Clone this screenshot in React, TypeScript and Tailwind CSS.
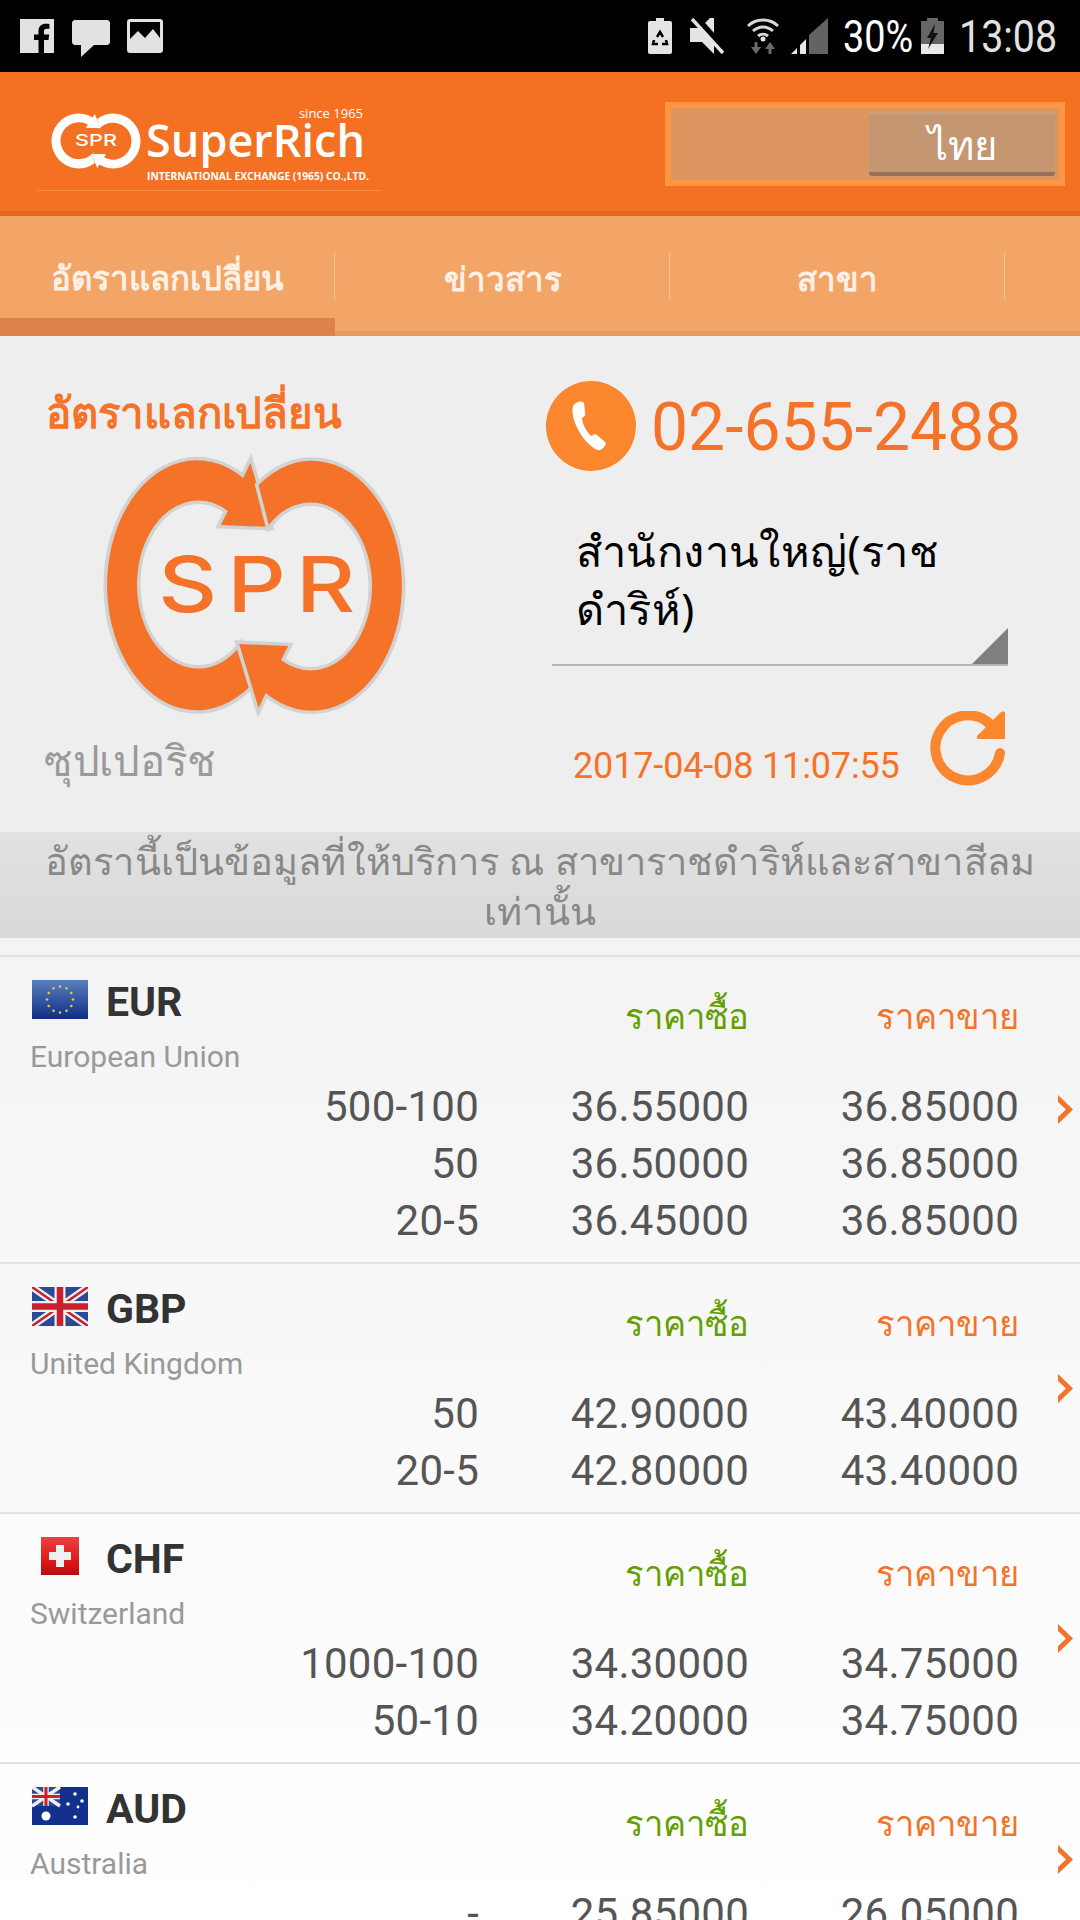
import React from 'react';

const roboto = "font-['Roboto',sans-serif]";

// --- LOGO ---
const ringPath = 'M243 477 A88 125 0 1 0 250 685 L240 645 A60 84 0 1 1 228 510 L221 524 L269 526 L250 462 Z';

const BigLogo = () => (
  <svg viewBox="100 450 310 270" preserveAspectRatio="none" className="ml-[97px] mt-[8px] h-[270px] w-[317px]">
    <g fill="#f57329" stroke="#d2d2d2" strokeWidth="7" style={{ paintOrder: 'stroke' }}>
      <path d={ringPath} />
      <path d={ringPath} transform="rotate(180 254 584.5)" />
    </g>
    <text transform="translate(160 611) scale(1.16 1)" x="0 58 116" fontFamily="Inter, sans-serif" fontWeight="500" fontSize="77" fill="#f57329">SPR</text>
  </svg>
);

const SmallLogo = () => (
  <svg viewBox="0 0 92 56" className="mt-[6px] h-[56px] w-[92px] shrink-0">
    <g fill="#fff" transform="scale(0.3087 0.2196) translate(-105 -457)">
      <path d={ringPath} />
      <path d={ringPath} transform="rotate(180 254 584.5)" />
    </g>
    <text x="25" y="33" fontFamily="Inter, sans-serif" fontWeight="500" fontSize="16" fill="#fff" textLength="42" lengthAdjust="spacingAndGlyphs">SPR</text>
  </svg>
);

// --- STATUS BAR ---
const StatusBar = () => (
  <div className="flex h-[72px] items-center bg-black pl-[20px]">
    <svg viewBox="0 0 34 34" className="h-[34px] w-[34px]">
      <path fill="#e2e2e2" d="M0 0H34V34H24V21H28.500L29.200 15.500H24V12.500C24 10.800 24.600 9.800 26.800 9.800H29.400V5C28.500 4.900 27.400 4.800 25.800 4.800C21.800 4.800 18.500 7.200 18.500 11.800V15.500H14V21H18.500V34H0Z" />
    </svg>
    <svg viewBox="0 0 38 38" className="ml-[18px] mt-[20px] h-[38px] w-[38px] self-start">
      <path fill="#e2e2e2" d="M3 0H35C36.600 0 38 1.400 38 3V22C38 23.600 36.600 25 35 25H22L9 37V25H3C1.400 25 0 23.600 0 22V3C0 1.400 1.400 0 3 0Z" />
    </svg>
    <svg viewBox="0 0 36 34" className="ml-[17px] h-[34px] w-[36px]">
      <path fill="#e2e2e2" fillRule="evenodd" d="M3 0H33C34.700 0 36 1.300 36 3V31C36 32.700 34.700 34 33 34H3C1.300 34 0 32.700 0 31V3C0 1.300 1.300 0 3 0ZM3 3V20L11 12L18 19L26 10L33 19V3Z" />
    </svg>

    <svg viewBox="0 0 24 36" className="ml-[485px] h-[36px] w-[24px]">
      <path fill="#e4e4e4" d="M8 0H16V3H22C23.200 3 24 3.800 24 5V34C24 35.200 23.200 36 22 36H2C0.800 36 0 35.200 0 34V5C0 3.800 0.800 3 2 3H8Z" />
      <path fill="none" stroke="#000" strokeWidth="2.500" d="M9 19L12 14L15 19M18 22L19 26H14M6 22L5 26H10" />
    </svg>
    <svg viewBox="0 0 34 36" className="ml-[18px] h-[36px] w-[34px]">
      <path fill="#e4e4e4" d="M20 0H24V36L12 24H0V10H10Z" />
      <path stroke="#000" strokeWidth="6" d="M5 -2L35 32" />
      <path stroke="#e4e4e4" strokeWidth="3.500" d="M2 1L33 35" />
    </svg>
    <svg viewBox="0 0 32 36" className="ml-[23px] h-[36px] w-[32px]">
      <g fill="none" stroke="#d8d8d8" strokeWidth="3">
        <path d="M1 8C9 0 23 0 31 8" />
        <path d="M6 13C12 7.500 20 7.500 26 13" />
        <path d="M11 18C14 15.500 18 15.500 21 18" />
      </g>
      <circle cx="16" cy="21" r="2.500" fill="#e4e4e4" />
      <path fill="#6a6a6a" d="M9 36L4 29H7.500V24H10.500V29H14ZM23 24L28 31H24.500V36H21.500V31H18Z" />
    </svg>
    <svg viewBox="0 0 37 36" className="ml-[12px] h-[36px] w-[37px]">
      <path fill="#636363" d="M37 0V36H18V17Z" />
      <path fill="#e8e8e8" d="M0 36L6 30V36ZM9 27L15 21V36H9Z" />
    </svg>
    <span className={`${roboto} ml-[15px] w-[81px] origin-left scale-x-[0.84] text-[45px] leading-none text-white`}>30%</span>
    <svg viewBox="0 0 23 36" className="-ml-[3px] h-[36px] w-[23px]">
      <path fill="#666" d="M6 0H17V3H23V26H0V3H6Z" />
      <path fill="#e8e8e8" d="M0 26H23V36H0Z" />
      <path fill="#111" d="M14 6L6 20H10L7 31L17 15H12.500Z" />
    </svg>
    <span className={`${roboto} ml-[15px] w-[110px] origin-left scale-x-[0.875] text-[45px] leading-none text-[#e2e2e2]`}>13:08</span>
  </div>
);

// --- HEADER ---
const Header = () => (
  <div className="flex h-[144px] justify-between border-b-[5px] border-[#e5661d] bg-[#f47022] pr-[15px] pt-[30px]">
    <div className="ml-[37px] h-[89px] w-[344px] border-b border-[#f78c4d] pl-[13px] pt-[5px]">
      <div className="flex">
        <SmallLogo />
        <div className="ml-[7px] flex w-[216px] flex-col items-end font-['Open_Sans',sans-serif] text-white">
          <span className="h-[12px] pr-[2px] text-[13px] leading-[12px]">since 1965</span>
          <span className="mt-[1px] text-[45px] font-semibold leading-[40px]">SuperRich</span>
          <span className="-mr-[4px] mt-[10px] whitespace-nowrap text-[10.3px] font-bold leading-[12px]">INTERNATIONAL EXCHANGE (1965) CO.,LTD.</span>
        </div>
      </div>
    </div>
    <div className="flex h-[84px] w-[400px] justify-end border-[6px] border-[#ff9441] bg-[#de9660] py-[4px] pr-[4px]">
      <div className="flex h-[64px] w-[186px] items-center justify-center rounded-[3px] border-b-[4px] border-t-[2px] border-b-[#96705a] border-t-[#cfa07c] bg-[#c49672] pt-[3px] font-['Noto_Sans',sans-serif] text-[40px] text-white">ไทย</div>
    </div>
  </div>
);

const tabs = ['อัตราแลกเปลี่ยน', 'ข่าวสาร', 'สาขา', ''];

const NavBar = () => (
  <div className="flex h-[120px] bg-[#f2a567]">
    {tabs.map((tab, i) => (
      <div key={tab} className={`relative flex h-full flex-col ${i === 3 ? 'w-[75px]' : 'w-[335px]'} ${i === 0 ? 'border-b-[18px] border-[#de824d]' : 'border-b-[5px] border-[#e59a60]'}`}>
        <div className={`flex flex-1 items-center justify-center font-['Noto_Sans',sans-serif] text-[33px] font-bold text-[#fdf1e6] ${i === 0 ? 'pt-[22px]' : 'pt-[10px]'}`}>{tab}</div>
        {i < 3 && <div className="absolute right-0 top-[36px] h-[48px] w-px bg-[#f7c196]" />}
      </div>
    ))}
  </div>
);

// --- INFO PANEL ---
const InfoPanel = () => (
  <div className="flex h-[496px] bg-[#eeeeee]">
    <div className="w-[520px]">
      <div className="ml-[46px] mt-[45px] h-[62px] font-['Noto_Sans',sans-serif] text-[42px] font-bold leading-[62px] tracking-[-0.2px] text-[#f57329]">อัตราแลกเปลี่ยน</div>
      <BigLogo />
      <div className="ml-[44px] mt-[9px] font-['Noto_Sans',sans-serif] text-[42px] leading-[60px] tracking-[-0.3px] text-[#9a9a9a]">ซุปเปอริช</div>
    </div>
    <div className="w-[560px] pt-[45px]">
      <div className="flex items-center pl-[26px]">
        <div className="flex h-[90px] w-[90px] items-center justify-center rounded-full bg-[#fa862d]">
          <svg viewBox="0 0 40 52" className="h-[52px] w-[38px]">
            <path fill="#fff" d="M3 2.500C6 0.500 9 0 11 0.500C12.500 1 13 3 13 5L14 14C14 15.500 12 17 10.500 17.500C11 24 15 32 20.500 36.500C22 35.500 24 34 25.500 35L34 42C36 43.500 36 45 34.500 47C32 50.500 29 52.500 26 51C14 45 1 26 0.500 10C0.400 6.500 1 4 3 2.500Z" />
          </svg>
        </div>
        <span className={`${roboto} ml-[15px] pt-[4px] text-[66px] leading-none text-[#f57329]`}>02-655-2488</span>
      </div>
      <div className="relative ml-[32px] mt-[46px] h-[149px] w-[456px] border-b-2 border-[#b4b4b4] pl-[24px] pt-[5px] font-['Noto_Sans',sans-serif] text-[43.4px] leading-[58px] tracking-[0.4px] text-black">
        สำนักงานใหญ่(ราช
        <br />
        ดำริห์)
        <div className="absolute bottom-0 right-0 h-0 w-0 border-b-[36px] border-l-[36px] border-b-[#808080] border-l-transparent" />
      </div>
      <div className="mt-[45px] flex items-end pl-[53px]">
        <span className={`${roboto} -mb-[2px] w-[357px] text-[36px] leading-[44px] tracking-[-0.15px] text-[#f57329]`}>2017-04-08 11:07:55</span>
        <svg viewBox="0 0 75 75" className="h-[75px] w-[75px]">
          <path fill="none" stroke="#fa862d" strokeWidth="10" strokeLinecap="round" d="M70 42A32.500 32.500 0 1 1 60 13" />
          <path fill="#fa862d" d="M75 2V28H49C47 28 46 26 47.500 24.500L70 2C72 0 75 0 75 2Z" />
        </svg>
      </div>
    </div>
  </div>
);

const Notice = () => (
  <div className="mb-[17px] flex h-[106px] items-center justify-center bg-gradient-to-b from-[#e1e1e1] to-[#d9d9d9] px-[30px] text-center font-['Noto_Sans',sans-serif] text-[38px] leading-[50px] tracking-[0.12px] text-[#888888]">
    อัตรานี้เป็นข้อมูลที่ให้บริการ ณ สาขาราชดำริห์และสาขาสีลมเท่านั้น
  </div>
);

// --- FLAGS ---
const EuFlag = () => (
  <svg viewBox="0 0 56 39" className="h-[39px] w-[56px]">
    <defs>
      <linearGradient id="eu" x1="0" y1="0" x2="0" y2="1">
        <stop offset="0" stopColor="#5b7fbd" />
        <stop offset="1" stopColor="#0f2f86" />
      </linearGradient>
    </defs>
    <rect width="56" height="39" fill="url(#eu)" />
    {Array.from({ length: 12 }).map((_, i) => (
      <circle key={i} cx={28 + 13 * Math.cos((i * Math.PI) / 6)} cy={19.5 + 13 * Math.sin((i * Math.PI) / 6)} r="1.300" fill="#e3c84a" />
    ))}
  </svg>
);

const GbFlag = () => (
  <svg viewBox="0 0 56 39" className="h-[39px] w-[56px]">
    <rect width="56" height="39" fill="#2a4a96" />
    <path stroke="#eee" strokeWidth="7" d="M0 0L56 39M56 0L0 39" />
    <path stroke="#c8202c" strokeWidth="2.500" d="M0 0L56 39M56 0L0 39" />
    <path stroke="#eee" strokeWidth="11" d="M28 0V39M0 19.500H56" />
    <path stroke="#c8202c" strokeWidth="6.500" d="M28 0V39M0 19.500H56" />
  </svg>
);

const ChFlag = () => (
  <svg viewBox="0 0 38 38" className="h-[38px] w-[38px]">
    <defs>
      <linearGradient id="ch" x1="0" y1="0" x2="0" y2="1">
        <stop offset="0" stopColor="#ec4040" />
        <stop offset="0.700" stopColor="#dc1414" />
        <stop offset="1" stopColor="#b01010" />
      </linearGradient>
    </defs>
    <rect width="38" height="38" fill="url(#ch)" />
    <path fill="#f0f0f0" d="M15 8H23V15H30V23H23V30H15V23H8V15H15Z" />
  </svg>
);

const AuFlag = () => (
  <svg viewBox="0 0 56 38" className="h-[38px] w-[56px]">
    <rect width="56" height="38" fill="#12308c" />
    <g transform="scale(0.5)">
      <rect width="56" height="38" fill="#2a4a96" />
      <path stroke="#eee" strokeWidth="7" d="M0 0L56 38M56 0L0 38" />
      <path stroke="#eee" strokeWidth="11" d="M28 0V38M0 19H56" />
      <path stroke="#c8202c" strokeWidth="6" d="M28 0V38M0 19H56" />
    </g>
    <circle cx="14" cy="29" r="4.500" fill="#fff" />
    <circle cx="43" cy="7" r="1.800" fill="#fff" />
    <circle cx="50" cy="14" r="1.800" fill="#fff" />
    <circle cx="36" cy="17" r="1.800" fill="#fff" />
    <circle cx="46" cy="20" r="1.400" fill="#fff" />
    <circle cx="43" cy="30" r="1.800" fill="#fff" />
  </svg>
);

// --- RATE LIST ---
const rates = [
  { code: 'EUR', name: 'European Union', flag: <EuFlag />, rows: [['500-100', '36.55000', '36.85000'], ['50', '36.50000', '36.85000'], ['20-5', '36.45000', '36.85000']] },
  { code: 'GBP', name: 'United Kingdom', flag: <GbFlag />, rows: [['50', '42.90000', '43.40000'], ['20-5', '42.80000', '43.40000']] },
  { code: 'CHF', name: 'Switzerland', flag: <ChFlag />, rows: [['1000-100', '34.30000', '34.75000'], ['50-10', '34.20000', '34.75000']] },
  { code: 'AUD', name: 'Australia', flag: <AuFlag />, rows: [['-', '25.85000', '26.05000']] },
];

const RateRow: React.FC<{ rate: (typeof rates)[number] }> = ({ rate }) => (
  <div className="flex items-center border-t-2 border-[#e2e2e2]">
    <div className="w-[1056px] pb-[13px] pt-[22px]">
      <div className="flex h-[99px]">
        <div className="w-[479px] pl-[30px]">
          <div className="flex h-[44px] items-start">
            <div className="mt-[1px] flex w-[58px] justify-center pl-[2px]">{rate.flag}</div>
            <span className={`${roboto} ml-[18px] mt-[3px] text-[41px] font-bold leading-[41px] text-[#333333]`}>{rate.code}</span>
          </div>
          <div className={`${roboto} mt-[17px] text-[30px] leading-[34px] text-[#999999]`}>{rate.name}</div>
        </div>
        <div className="w-[270px] pt-[12px] text-right font-['Noto_Sans',sans-serif] text-[34.6px] leading-[50px] text-[#62a000]">ราคาซื้อ</div>
        <div className="w-[270px] pt-[12px] text-right font-['Noto_Sans',sans-serif] text-[34.6px] leading-[50px] text-[#f57329]">ราคาขาย</div>
      </div>
      {rate.rows.map(row => (
        <div key={row[0]} className={`${roboto} grid grid-cols-[479px_270px_270px] text-right text-[42px] leading-[57px] tracking-[0.25px] text-[#555555]`}>
          {row.map((cell, i) => (
            <span key={i}>{cell}</span>
          ))}
        </div>
      ))}
    </div>
    <svg viewBox="0 0 15 29" className="ml-[2px] h-[29px] w-[15px]">
      <path fill="#f57329" d="M0 0L15 14.500L0 29V22L8 14.500L0 7Z" />
    </svg>
  </div>
);

export default function App() {
  return (
    <div className="h-[1920px] w-[1080px] overflow-hidden bg-white">
      <StatusBar />
      <Header />
      <NavBar />
      <InfoPanel />
      <div className="h-[1088px] bg-gradient-to-b from-[#f2f2f2] to-white">
        <Notice />
        {rates.map(rate => (
          <RateRow key={rate.code} rate={rate} />
        ))}
      </div>
    </div>
  );
}
